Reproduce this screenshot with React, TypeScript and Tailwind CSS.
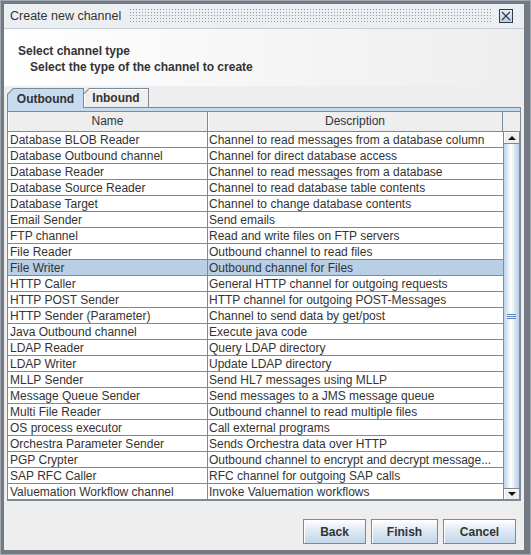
import React from "react";

const rows: [string, string][] = [
  ["Database BLOB Reader", "Channel to read messages from a database column"],
  ["Database Outbound channel", "Channel for direct database access"],
  ["Database Reader", "Channel to read messages from a database"],
  ["Database Source Reader", "Channel to read database table contents"],
  ["Database Target", "Channel to change database contents"],
  ["Email Sender", "Send emails"],
  ["FTP channel", "Read and write files on FTP servers"],
  ["File Reader", "Outbound channel to read files"],
  ["File Writer", "Outbound channel for Files"],
  ["HTTP Caller", "General HTTP channel for outgoing requests"],
  ["HTTP POST Sender", "HTTP channel for outgoing POST-Messages"],
  ["HTTP Sender (Parameter)", "Channel to send data by get/post"],
  ["Java Outbound channel", "Execute java code"],
  ["LDAP Reader", "Query LDAP directory"],
  ["LDAP Writer", "Update LDAP directory"],
  ["MLLP Sender", "Send HL7 messages using MLLP"],
  ["Message Queue Sender", "Send messages to a JMS message queue"],
  ["Multi File Reader", "Outbound channel to read multiple files"],
  ["OS process executor", "Call external programs"],
  ["Orchestra Parameter Sender", "Sends Orchestra data over HTTP"],
  ["PGP Crypter", "Outbound channel to encrypt and decrypt message..."],
  ["SAP RFC Caller", "RFC channel for outgoing SAP calls"],
  ["Valuemation Workflow channel", "Invoke Valuemation workflows"],
];

function Btn({ label, w }: { label: string; w: string }) {
  return (
    <div
      className={`${w} h-[25px] border border-[#7a8a99] bg-[linear-gradient(to_bottom,#ffffff,#dfe9f4_45%,#c3d6ea)] shadow-[inset_1px_1px_0_#ffffff] flex items-center justify-center pt-[2px] font-bold text-[#333333] leading-[15px]`}
    >
      {label}
    </div>
  );
}

export default function App() {
  return (
    <div className="w-[531px] h-[555px] border border-[#a3a9b0] bg-[#737a83] pt-[3px] pl-[3px] pr-[6px] pb-[4px] flex flex-col font-['Liberation_Sans',Arial,sans-serif] text-[12px] text-[#333333] overflow-hidden">
      {/* title bar */}
      <div className="h-[25px] shrink-0 bg-[#eceff2] border-b border-[#c4ccd5] flex items-center pl-[6px] pr-[11px]">
        <span className="leading-[15px] text-[12.5px] whitespace-nowrap">Create new channel</span>
        <div className="ml-[8px] flex-1 h-[16px] bg-[radial-gradient(circle,#8d949c_0.7px,transparent_0.9px)] bg-[length:3px_3px]" />
        <div className="ml-[7px] w-[14px] h-[14px] border border-[#333a44] bg-[linear-gradient(to_bottom,#e4eef8,#b9cfe6)] flex items-center justify-center">
          <svg width="12" height="12" viewBox="0 0 12 12">
            <path d="M2 2 L10 10 M10 2 L2 10" stroke="#2b3440" strokeWidth="1.2" fill="none" />
          </svg>
        </div>
      </div>

      {/* content */}
      <div className="flex-1 flex flex-col bg-[#eeeeee]">
        {/* header */}
        <div className="h-[57px] shrink-0 bg-[linear-gradient(to_right,#ffffff,#f4f4f4_60%,#eeeeee)] pt-[14px] font-bold leading-[16px]">
          <div className="pl-[14px]">Select channel type</div>
          <div className="pl-[26px]">Select the type of the channel to create</div>
        </div>

        {/* tabs */}
        <div className="mt-[2px] h-[19px] shrink-0 flex items-start pl-[3px] relative z-10">
          <div className="w-[77px] h-[20px] bg-[#7a8a99] pt-px px-px [clip-path:polygon(6px_0,100%_0,100%_100%,0_100%,0_6px)]">
            <div className="h-full bg-[#c6daf0] [clip-path:polygon(5.5px_0,100%_0,100%_100%,0_100%,0_5.5px)] flex items-center justify-center pt-px font-bold leading-[15px]">
              Outbound
            </div>
          </div>
          <div className="-ml-px w-[66px] h-[19px] bg-[#7a8a99] pt-px px-px [clip-path:polygon(6px_0,100%_0,100%_100%,0_100%,0_6px)]">
            <div className="h-full bg-[#eeeeee] shadow-[inset_1px_1px_0_#ffffff] [clip-path:polygon(5.5px_0,100%_0,100%_100%,0_100%,0_5.5px)] flex items-center justify-center pt-px font-bold leading-[15px]">
              Inbound
            </div>
          </div>
        </div>

        {/* tab panel */}
        <div className="ml-[3px] mr-[3px] h-[394px] shrink-0 border border-[#7a8a99] flex flex-col bg-[#eeeeee]">
          <div className="h-[3px] bg-[#c6daf0]" />
          {/* header */}
          <div className="h-[21px] flex border-y border-[#7a8a99] bg-[#eeeeee]">
            <div className="w-[200px] border-r border-[#7a8a99] flex items-center justify-center leading-[15px] shadow-[inset_1px_0_0_#ffffff]">
              Name
            </div>
            <div className="w-[295px] border-r border-[#7a8a99] flex items-center justify-center leading-[15px] shadow-[inset_1px_0_0_#ffffff]">
              Description
            </div>
            <div className="flex-1" />
          </div>
          {/* body */}
          <div className="flex-1 flex">
            <div className="w-[495px] flex flex-col bg-white">
              {rows.map(([n, d], i) => (
                <div
                  key={n}
                  className={`h-[16px] flex border-b border-[#7a8a99] leading-[16px] ${i === 8 ? "bg-[#b8cfe5]" : "bg-white"}`}
                >
                  <div className="w-[200px] border-r border-[#7a8a99] pl-[2px] whitespace-nowrap overflow-hidden">{n}</div>
                  <div className="flex-1 pl-[1px] whitespace-nowrap overflow-hidden">{d}</div>
                </div>
              ))}
            </div>
            {/* scrollbar */}
            <div className="flex-1 flex flex-col bg-[#eeeeee]">
              <div className="h-[12px] border border-[#7a8a99] border-t-0 bg-[#eeeeee] shadow-[inset_1px_1px_0_#ffffff] flex items-center justify-center">
                <div className="w-0 h-0 border-l-[4px] border-r-[4px] border-b-[4px] border-l-transparent border-r-transparent border-b-[#111111]" />
              </div>
              <div className="flex-1 border-x border-[#6f8fc9] bg-[linear-gradient(to_right,#bcd2ec,#ffffff_45%,#b6cde6)] flex flex-col items-center justify-center gap-px">
                <div className="w-[9px] h-px bg-[#6382bf]" />
                <div className="w-[9px] h-px bg-[#6382bf]" />
                <div className="w-[9px] h-px bg-[#6382bf]" />
              </div>
              <div className="h-[12px] border border-[#7a8a99] bg-[#eeeeee] shadow-[inset_1px_1px_0_#ffffff] flex items-center justify-center">
                <div className="w-0 h-0 border-l-[4px] border-r-[4px] border-t-[4px] border-l-transparent border-r-transparent border-t-[#111111]" />
              </div>
            </div>
          </div>
        </div>

        {/* buttons */}
        <div className="mt-[18px] h-[25px] shrink-0 flex justify-end gap-[5px] pr-[8px]">
          <Btn label="Back" w="w-[63px]" />
          <Btn label="Finish" w="w-[67px]" />
          <Btn label="Cancel" w="w-[73px]" />
        </div>
        <div className="flex-1" />
      </div>
    </div>
  );
}
